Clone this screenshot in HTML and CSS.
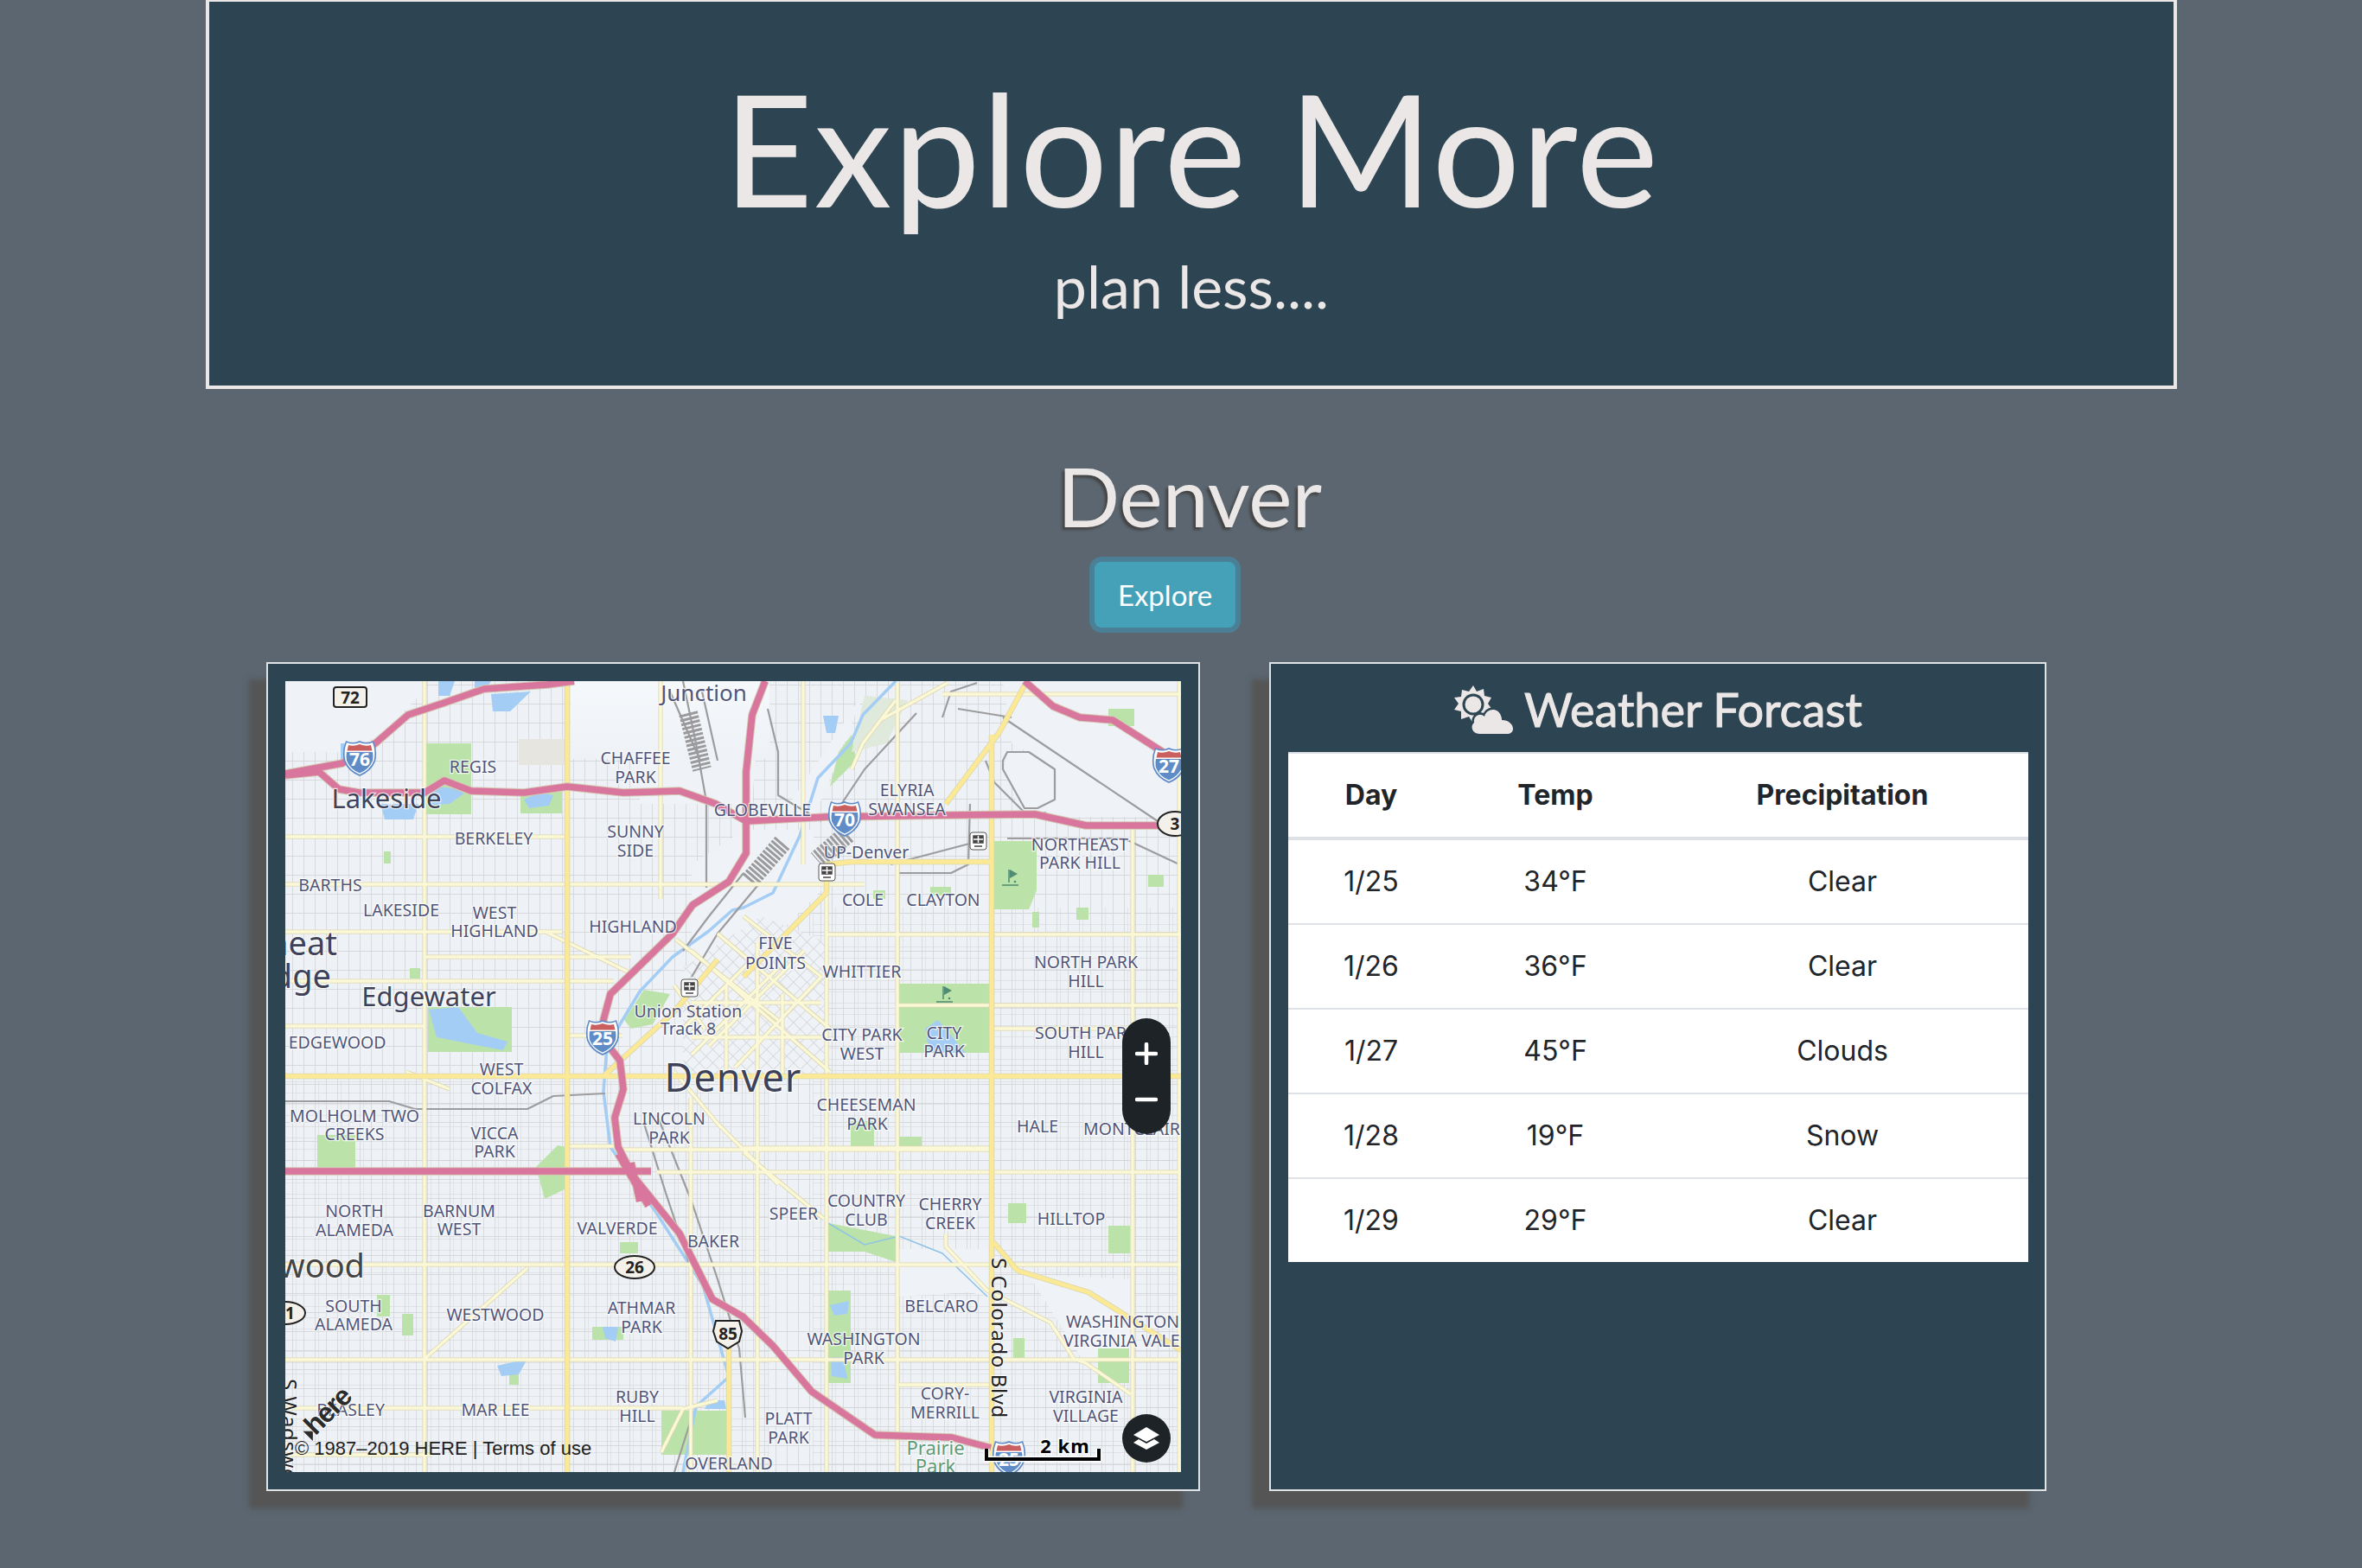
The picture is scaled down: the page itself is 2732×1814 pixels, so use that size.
FILE: index.html
```html
<!DOCTYPE html>
<html lang="en">
<head>
<meta charset="utf-8">
<title>Explore More</title>
<link rel="stylesheet" href="styles.css">
</head>
<body>
<header class="hero">
  <h1 class="hero-title">Explore More</h1>
  <p class="hero-sub">plan less....</p>
</header>
<section class="city">
  <h2 class="city-name">Denver</h2>
  <button class="explore-btn" type="button">Explore</button>
</section>
<main class="cards">
  <div class="card card-map">
    <div class="map">
      <svg class="map-svg" viewBox="330 788 1036 915" width="1036" height="915" xmlns="http://www.w3.org/2000/svg">
        <defs>
          <pattern id="streets" width="13" height="22" patternUnits="userSpaceOnUse">
            <path class="grid" d="M0 0V22M0 0H13"/>
          </pattern>
          <pattern id="streets-b" width="26" height="13" patternUnits="userSpaceOnUse" x="4" y="3">
            <path class="grid" d="M0 0V13M0 0H26"/>
          </pattern>
          <pattern id="downtown" width="11" height="11" patternUnits="userSpaceOnUse" patternTransform="rotate(45)">
            <path class="grid" d="M0 0V11M0 0H11"/>
          </pattern>
          <linearGradient id="north" x1="0" y1="0" x2="0" y2="1">
            <stop offset="0" stop-color="#f6f9fc"/>
            <stop offset="1" stop-color="#eef1f5"/>
          </linearGradient>
          <symbol id="shield" viewBox="0 0 40 44">
            <path class="sh-blue" d="M4 2Q12 6 20 2Q28 6 36 2Q41 14 38 26Q33 38 20 43Q7 38 2 26Q-1 14 4 2Z"/>
            <path class="sh-white" d="M5 4Q12 7 20 4Q28 7 35 4Q39 14 36.500 25Q32 36 20 41Q8 36 3.500 25Q1 14 5 4Z"/>
            <path class="sh-blue" d="M5 15H35Q36 20 35 25Q31 35 20 39.500Q9 35 5 25Q4 20 5 15Z"/>
            <path class="sh-red" d="M7 7Q13 9 20 6Q27 9 33 7L34.500 13.500H5.500Z"/>
          </symbol>
          <g id="arterials">
            <path d="M491 788V1703M764 788V1040M929 788V1000M1038 790V1703M1310 950V1703M1364 788V1703M799 1270V1703M876 1250V1703M956 1010V1703"/>
            <path d="M330 968H655M330 1023H1000M330 1078H650M491 1107H730M330 1135H710M330 1187H491M655 1198H720M330 1463H1366M330 1573H1366M330 1629H790M330 1683H500M860 1328H1146M760 1356H1366M956 1081H1366M1038 1163H1366M1147 1190H1310M1090 803H1366M720 1330H1146M1040 1602H1146M656 1326H715"/>
            <path d="M629 1077L732 1127M491 1572L610 1467M782 1087L900 1180M860 1333L953 1410M1094 1427V1442L1142 1493L1215 1530L1242 1572L1256 1577L1308 1613M1036 810L998 860L985 890M1020 832L1096 790M780 1240L830 1300L900 1370M815 1190L780 1140M520 1260L470 1240M765 1680L790 1630L830 1620"/>
            <path d="M800 1100L960 1240M830 1080L960 1190M860 1060L950 1130M900 1120L800 1220M930 1100L820 1210M950 1130L850 1235M870 1110L790 1190M840 1140V1250M876 1090V1250M905 1150V1250M800 1160H950M800 1200H950"/>
          </g>
          <g id="majors">
            <path d="M656 788V1703M1147 850V1703M330 1245H1366M985 997H1147M1094 930L1156 847L1185 793M956 1033L860 1130M956 1033V1000L985 997M1149 1437L1177 1470L1259 1495L1304 1523L1366 1562M700 1243L780 1170L830 1110M843 1545V1703"/>
          </g>
          <g id="highways">
            <path d="M330 895L396 883L434 860L472 827L514 813L560 797L633 792L664 788"/>
            <path d="M330 897L369 893L392 913L415 917L491 917L514 903L545 915L606 917L656 910L721 917L786 915L828 930L863 950L956 945L1101 943L1197 942L1256 955L1345 955"/>
            <path d="M885 788L870 827L863 893V987L843 1020L801 1047L778 1080L740 1117L706 1150L698 1180L700 1205L717 1227L721 1260L711 1293L715 1327L732 1360L786 1427L824 1503L859 1523L894 1557L939 1610L1012 1660L1101 1663L1146 1675"/>
            <path d="M1185 788L1218 817L1249 830L1287 833L1345 870"/>
            <path d="M330 1355H753M715 1335L750 1395M730 1345L740 1390"/>
          </g>
        </defs>

        <rect class="land" x="330" y="788" width="1036" height="915"/>
        <rect x="330" y="788" width="1036" height="915" fill="url(#streets)"/>
        <rect x="940" y="1050" width="426" height="653" fill="url(#streets-b)" class="soft"/>
        <rect x="330" y="1250" width="560" height="453" fill="url(#streets-b)" class="soft"/>

        <!-- open / industrial ground -->
        <path class="open" d="M665 788H880L870 930H740V800H665Z"/>
        <path class="open" d="M330 788H490V800L440 850L400 870H330Z"/>
        <rect class="north" x="660" y="788" width="230" height="90"/>
        <path class="open" d="M880 788H1160L1170 860L1340 950L1364 960V788ZM1000 800L900 950H940Z"/>
        <path class="open" d="M1160 870H1300L1340 945H1180Z"/>
        <path class="open" d="M800 1000L860 960L940 960L950 1030L860 1120H800Z"/>
        <path class="open" d="M1040 1445H1146V1500L1120 1495L1040 1500Z"/>
        <path class="open" d="M1190 1475L1310 1480V1570H1250Z"/>
        <polygon points="790,1120 880,1060 955,1090 955,1245 790,1245" class="open"/>
        <polygon points="790,1120 880,1060 955,1090 955,1245 790,1245" fill="url(#downtown)"/>
        <path class="khaki" d="M600 855H655V885H600Z"/>

        <!-- parks -->
        <g class="park">
          <rect x="493" y="860" width="52" height="82"/>
          <rect x="602" y="916" width="48" height="25"/>
          <rect x="495" y="1165" width="97" height="52"/>
          <rect x="367" y="1313" width="44" height="38"/>
          <rect x="1037" y="1138" width="107" height="25"/>
          <rect x="1037" y="1165" width="107" height="53"/>
          <path d="M1149 973H1199V1030L1190 1052H1149Z"/>
          <rect x="958" y="1493" width="26" height="107"/>
          <path d="M958 1415L1036 1430V1460L1000 1448H958Z"/>
          <rect x="765" y="1632" width="78" height="51"/>
          <path d="M620 1350L645 1325L655 1327V1375L630 1387Z"/>
          <rect x="717" y="1437" width="21" height="13"/>
          <rect x="685" y="1535" width="36" height="15"/>
          <rect x="984" y="1297" width="27" height="30"/>
          <rect x="1040" y="1315" width="26" height="12"/>
          <rect x="1166" y="1392" width="21" height="23"/>
          <rect x="1282" y="1418" width="25" height="32"/>
          <path d="M722 1180L745 1145L775 1150L755 1185L730 1190Z"/>
          <rect x="1282" y="820" width="30" height="20"/>
          <rect x="1270" y="1560" width="36" height="40"/>
          <rect x="1172" y="1548" width="13" height="24"/>
          <rect x="1245" y="1050" width="14" height="14"/>
          <rect x="1328" y="1012" width="18" height="14"/>
          <rect x="444" y="985" width="8" height="14"/>
          <rect x="474" y="1120" width="12" height="12"/>
          <rect x="436" y="1498" width="15" height="25"/>
          <rect x="465" y="1520" width="13" height="25"/>
          <rect x="589" y="1587" width="11" height="15"/>
          <path d="M970 870L985 850L990 880L960 910Z"/>
          <path d="M1000 805L1050 810L1025 860L985 870Z" class="park-pale"/>
          <rect x="1010" y="1030" width="14" height="10"/>
          <rect x="1076" y="1026" width="24" height="10"/>
          <rect x="1194" y="1055" width="8" height="18"/>
        </g>

        <!-- water -->
        <g class="water">
          <path d="M507 788H526L520 805H507ZM549 788H568L560 800H549ZM568 803L614 800L590 823L570 823Z"/>
          <path d="M495 915Q515 905 537 918L520 930L495 932Z"/>
          <path d="M440 930H484L478 948L445 948Z"/>
          <path d="M606 925Q625 915 640 920L635 932L612 935Z"/>
          <path d="M496 1168L530 1165L552 1195L587 1205L582 1215L545 1208L505 1200Z"/>
          <path d="M394 860H403V880H394Z"/>
          <path d="M952 828H970L966 848H956Z"/>
          <path d="M1070 1190L1085 1180L1117 1218H1075Z"/>
          <path d="M960 1510L982 1505L980 1520L965 1522Z"/>
          <path d="M961 1570L975 1570L980 1595L962 1592Z"/>
          <path d="M575 1580L610 1572L600 1590L580 1592Z"/>
          <path d="M697 1535H715L712 1552L700 1548Z"/>
          <path d="M820 1620L838 1620L840 1630H815Z"/>
        </g>
        <path class="river" d="M1036 788L998 827L984 860L946 900L925 967L894 1033L860 1050L847 1053L820 1077L778 1107L740 1147L702 1210L698 1263L706 1327L759 1403L813 1487L843 1593L805 1627L790 1703"/>
        <path class="creek" d="M958 1415L1000 1440L1040 1430L1090 1450L1142 1500"/>

        <!-- rail -->
        <g class="rail">
          <path d="M790 788L805 860L817 927V1027M812 800L830 880M775 800L810 880"/>
          <path d="M888 820L900 870V920L950 950M1090 830L1100 800L1130 790M1160 830L1339 950M1108 820L1170 830M1060 825L1000 890L960 950"/>
          <path d="M1160 880L1165 870H1190L1220 890V925L1200 935H1185L1160 890ZM1140 880L1150 905L1185 940H1210"/>
          <path d="M1030 1000L1125 975M1165 970H1300L1364 1000M1040 1010H1100L1120 1000L1122 930"/>
          <path d="M860 1010L820 1060L790 1100M880 1020L830 1080L800 1130"/>
          <path d="M330 1274H450L480 1283H610L640 1268L700 1265M760 1290L800 1390L830 1480L855 1560L862 1640M745 1300L770 1380L800 1470L800 1640L780 1703"/>
        </g>
        <path class="yard" d="M796 825L812 890"/>
        <path class="yard" d="M905 975L866 1020"/>
        <path class="yard" d="M980 965L945 995"/>

        <!-- roads -->
        <use href="#arterials" class="case thin"/>
        <use href="#arterials" class="road-art"/>
        <use href="#majors" class="case"/>
        <use href="#majors" class="road-major"/>
        <use href="#highways" class="case-hw"/>
        <use href="#highways" class="road-hw"/>

        <!-- labels -->
        <g class="lbl big">
          <text x="814" y="811" class="s26">Junction</text>
          <text x="447" y="935">Lakeside</text>
          <text x="496" y="1164">Edgewater</text>
          <text x="848" y="1263" class="s50">Denver</text>
          <text x="390" y="1105" class="end s38">Wheat</text>
          <text x="383" y="1143" class="end s38">Ridge</text>
          <text x="422" y="1478" class="end s38 grey">Lakewood</text>
        </g>
        <g class="lbl">
          <text x="547" y="894">REGIS</text>
          <text x="735" y="884">CHAFFEE</text><text x="735" y="906">PARK</text>
          <text x="882" y="944">GLOBEVILLE</text>
          <text x="1049" y="921">ELYRIA</text><text x="1049" y="943">SWANSEA</text>
          <text x="571" y="977">BERKELEY</text>
          <text x="735" y="969">SUNNY</text><text x="735" y="991">SIDE</text>
          <text x="1002" y="993">UP-Denver</text>
          <text x="1249" y="984">NORTHEAST</text><text x="1249" y="1005">PARK HILL</text>
          <text x="382" y="1031">BARTHS</text>
          <text x="464" y="1060">LAKESIDE</text>
          <text x="572" y="1063">WEST</text><text x="572" y="1084">HIGHLAND</text>
          <text x="732" y="1079">HIGHLAND</text>
          <text x="998" y="1048">COLE</text>
          <text x="1091" y="1048">CLAYTON</text>
          <text x="897" y="1098">FIVE</text><text x="897" y="1121">POINTS</text>
          <text x="997" y="1131">WHITTIER</text>
          <text x="1256" y="1120">NORTH PARK</text><text x="1256" y="1142">HILL</text>
          <text x="796" y="1177">Union Station</text><text x="796" y="1197">Track 8</text>
          <text x="997" y="1204">CITY PARK</text><text x="997" y="1226">WEST</text>
          <text x="1092" y="1202">CITY</text><text x="1092" y="1223">PARK</text>
          <text x="1256" y="1202">SOUTH PARK</text><text x="1256" y="1224">HILL</text>
          <text x="390" y="1213">EDGEWOOD</text>
          <text x="580" y="1244">WEST</text><text x="580" y="1266">COLFAX</text>
          <text x="1002" y="1285">CHEESEMAN</text><text x="1003" y="1307">PARK</text>
          <text x="774" y="1301">LINCOLN</text><text x="774" y="1323">PARK</text>
          <text x="410" y="1298">MOLHOLM TWO</text><text x="410" y="1319">CREEKS</text>
          <text x="572" y="1318">VICCA</text><text x="572" y="1339">PARK</text>
          <text x="1200" y="1310">HALE</text>
          <text x="1253" y="1313" class="start">MONTCLAIR</text>
          <text x="410" y="1408">NORTH</text><text x="410" y="1430">ALAMEDA</text>
          <text x="531" y="1408">BARNUM</text><text x="531" y="1429">WEST</text>
          <text x="714" y="1428">VALVERDE</text>
          <text x="825" y="1443">BAKER</text>
          <text x="918" y="1411">SPEER</text>
          <text x="1002" y="1396">COUNTRY</text><text x="1002" y="1418">CLUB</text>
          <text x="1099" y="1400">CHERRY</text><text x="1099" y="1422">CREEK</text>
          <text x="1239" y="1417">HILLTOP</text>
          <text x="409" y="1518">SOUTH</text><text x="409" y="1539">ALAMEDA</text>
          <text x="573" y="1528">WESTWOOD</text>
          <text x="742" y="1520">ATHMAR</text><text x="742" y="1542">PARK</text>
          <text x="1089" y="1518">BELCARO</text>
          <text x="999" y="1556">WASHINGTON</text><text x="999" y="1578">PARK</text>
          <text x="1233" y="1536" class="start">WASHINGTON</text>
          <text x="1230" y="1558" class="start">VIRGINIA VALE</text>
          <text x="737" y="1623">RUBY</text><text x="737" y="1645">HILL</text>
          <text x="573" y="1638">MAR LEE</text>
          <text x="445" y="1638" class="end">BEASLEY</text>
          <text x="1093" y="1619">CORY-</text><text x="1093" y="1641">MERRILL</text>
          <text x="1256" y="1623">VIRGINIA</text><text x="1256" y="1645">VILLAGE</text>
          <text x="912" y="1648">PLATT</text><text x="912" y="1670">PARK</text>
          <text x="1082" y="1683" class="green">Prairie</text><text x="1082" y="1704" class="green">Park</text>
          <text x="843" y="1700">OVERLAND</text>
        </g>
        <text class="street" transform="translate(1147 1455) rotate(90)">S Colorado Blvd</text>
        <text class="street" transform="translate(326 1595) rotate(90)">S Wadsworth Blvd</text>

        <!-- interstate shields -->
        <use href="#shield" x="396" y="855" width="40" height="44"/>
        <use href="#shield" x="677" y="1178" width="40" height="44"/>
        <use href="#shield" x="957" y="925" width="40" height="44"/>
        <use href="#shield" x="1332" y="863" width="40" height="44"/>
        <use href="#shield" x="1147" y="1665" width="40" height="44"/>
        <g class="shield-num">
          <text x="416" y="886">76</text>
          <text x="697" y="1209">25</text>
          <text x="977" y="956">70</text>
          <text x="1352" y="894">27</text>
          <text x="1167" y="1696">25</text>
        </g>

        <!-- route signs -->
        <rect class="sign" x="386" y="795" width="38" height="23" rx="3"/>
        <text class="sign-num" x="405" y="814">72</text>
        <ellipse class="sign" cx="734" cy="1466" rx="23" ry="13"/>
        <text class="sign-num" x="734" y="1473">26</text>
        <ellipse class="sign" cx="330" cy="1519" rx="23" ry="13"/>
        <text class="sign-num" x="330" y="1526">21</text>
        <ellipse class="sign" cx="1359" cy="953" rx="20" ry="14"/>
        <text class="sign-num" x="1359" y="960">3</text>
        <path class="sign" d="M828 1528H855L858 1540L855 1552L842 1560L829 1552L825 1540Z"/>
        <text class="sign-num" x="842" y="1550">85</text>

        <!-- transit markers -->
        <g class="transit" transform="translate(788 1133)">
          <rect width="19" height="20" rx="3"/><path d="M4 4H15V12H4ZM5 16H14"/><path class="t-gap" d="M9.500 4V12M4 8H15"/>
        </g>
        <g class="transit" transform="translate(1122 963)">
          <rect width="19" height="20" rx="3"/><path d="M4 4H15V12H4ZM5 16H14"/><path class="t-gap" d="M9.500 4V12M4 8H15"/>
        </g>
        <g class="transit" transform="translate(947 999)">
          <rect width="19" height="20" rx="3"/><path d="M4 4H15V12H4ZM5 16H14"/><path class="t-gap" d="M9.500 4V12M4 8H15"/>
        </g>

        <!-- golf flags -->
        <g class="flag" transform="translate(1165 1006)">
          <path class="flag-pole" d="M2 0V15M-6 18H13"/><path d="M3 0L12 5L3 10Z"/><circle cx="9" cy="14" r="1.300"/>
        </g>
        <g class="flag" transform="translate(1089 1141)">
          <path class="flag-pole" d="M2 0V15M-6 18H13"/><path d="M3 0L12 5L3 10Z"/><circle cx="9" cy="14" r="1.300"/>
        </g>

        <!-- attribution -->
        <g transform="rotate(-45 376 1636)">
          <path class="here-dot" d="M344 1632L352 1640L344 1648Z"/>
          <text class="here" x="350" y="1646">here</text>
        </g>
        <text class="copy" x="341" y="1683">© 1987–2019 HERE | Terms of use</text>

        <!-- scale -->
        <path class="scale-halo" d="M1141 1676V1688H1271V1676"/>
        <path class="scale" d="M1141 1676V1688H1271V1676"/>
        <text class="scale-text" x="1232" y="1681">2 km</text>
      </svg>
      <div class="zoom-ctrl">
        <button class="map-btn" type="button" aria-label="Zoom in">
          <svg width="26" height="26" viewBox="0 0 26 26"><path d="M13 2V24M2 13H24"/></svg>
        </button>
        <button class="map-btn" type="button" aria-label="Zoom out">
          <svg width="26" height="26" viewBox="0 0 26 26"><path d="M2 13H24"/></svg>
        </button>
      </div>
      <button class="layers-btn" type="button" aria-label="Layers">
        <svg width="32" height="28" viewBox="0 0 32 28">
          <path class="lay-top" d="M16 1L31 10L16 18L1 10Z"/>
          <path class="lay-bot" d="M7 15L1 19L16 27L31 19L25 15L16 20Z"/>
        </svg>
      </button>
    </div>
  </div>

  <div class="card card-weather">
    <div class="weather-head">
      <svg class="weather-icon" width="69" height="56" viewBox="0 0 69 56" aria-hidden="true">
        <path class="sun" d="M23 0L27 7L35 4L36 12L44 14L40 21L45 28L37 30L36 38L28 36L23 44L18 36L9 39L9 30L1 28L6 21L1 14L9 13L10 5L18 7Z"/>
        <circle class="sun-gap" cx="23" cy="22" r="12.500"/>
        <circle class="sun" cx="23" cy="22" r="9.500"/>
        <path class="cloud-edge" d="M30 56C22 56 19 47 24 43C23 35 31 31 36 36C38 26 52 25 55 35C56 37 56 39 56 40C64 40 69 45 69 50C69 54 66 56 62 56Z"/>
        <path class="sun" d="M30 56C22 56 19 47 24 43C23 35 31 31 36 36C38 26 52 25 55 35C56 37 56 39 56 40C64 40 69 45 69 50C69 54 66 56 62 56Z"/>
      </svg>
      <h3 class="weather-title">Weather Forcast</h3>
    </div>
    <table class="forecast">
      <colgroup><col class="col-day"><col class="col-temp"><col class="col-prec"></colgroup>
      <thead>
        <tr><th>Day</th><th>Temp</th><th>Precipitation</th></tr>
      </thead>
      <tbody>
        <tr><td>1/25</td><td>34°F</td><td>Clear</td></tr>
        <tr><td>1/26</td><td>36°F</td><td>Clear</td></tr>
        <tr><td>1/27</td><td>45°F</td><td>Clouds</td></tr>
        <tr><td>1/28</td><td>19°F</td><td>Snow</td></tr>
        <tr><td>1/29</td><td>29°F</td><td>Clear</td></tr>
      </tbody>
    </table>
  </div>
</main>
</body>
</html>
```
FILE: styles.css
```css
* { box-sizing: border-box; }
html, body { margin: 0; padding: 0; }
body {
  background: #5b6670;
  color: #ebe7e6;
  font-family: Lato, "Noto Sans", sans-serif;
  height: 1814px;
  overflow: hidden;
}
.hero {
  margin: -2px 0 0 238px;
  width: 2280px;
  height: 452px;
  background: #2d4452;
  border: 4px solid #ebe7e6;
  text-align: center;
  padding-top: 58px;
}
.hero-title {
  margin: 0;
  font-weight: 400;
  font-size: 180px;
  line-height: 220px;
  letter-spacing: 1.500px;
}
.hero-sub {
  margin: 11px 0 0;
  font-size: 68px;
  line-height: 80px;
  font-weight: 400;
}
.city {
  margin-left: 238px;
  width: 2280px;
  text-align: center;
  padding-top: 63px;
  height: 316px;
}
.city-name {
  margin: 0 4px 0 0;
  font-size: 95px;
  line-height: 120px;
  font-weight: 400;
  text-shadow: -3px 3px 3px #444;
}
.explore-btn {
  display: inline-block;
  margin: 17px 61px 0 0;
  width: 163px;
  height: 76px;
  background: #45a1b8;
  border: 0;
  border-radius: 8px;
  box-shadow: 0 0 0 6px #4a7f95;
  color: #fff;
  font-family: Lato, "Noto Sans", sans-serif;
  font-size: 33px;
  padding: 0;
}
.cards {
  display: flex;
  gap: 80px;
  margin-left: 308px;
}
.card {
  height: 959px;
  background: #2d4452;
  border: 2px solid #dfe3e5;
  box-shadow: -20px 20px 6px #555;
  padding: 20px;
}
.card-map { width: 1080px; }
.card-weather { width: 899px; }
.map {
  position: relative;
  width: 1036px;
  height: 915px;
  overflow: hidden;
}
.map-svg { display: block; }
.zoom-ctrl {
  position: absolute;
  left: 968px;
  top: 390px;
  width: 56px;
  height: 134px;
  padding: 14px 0;
  border-radius: 28px;
  background: #1d2327;
  display: flex;
  flex-direction: column;
}
.map-btn {
  flex: 1;
  background: none;
  border: 0;
  padding: 0;
  display: flex;
  align-items: center;
  justify-content: center;
}
.map-btn path {
  stroke: #fff;
  stroke-width: 4.500;
  stroke-linecap: round;
  fill: none;
}
.layers-btn {
  position: absolute;
  left: 968px;
  top: 848px;
  width: 56px;
  height: 56px;
  border-radius: 50%;
  border: 0;
  padding: 0;
  background: #1d2327;
  display: flex;
  align-items: center;
  justify-content: center;
}
.lay-top { fill: #fff; }
.lay-bot { fill: #fff; }

/* map painting */
.land { fill: #eef1f5; }
.grid { stroke: #cfd1d5; stroke-width: 1.400; fill: none; }
.soft { opacity: .6; }
.open { fill: #eff2f6; }
.north { fill: url(#north); }
.khaki { fill: #e6e5df; }
.park { fill: #bbe3a9; }
.park-pale { fill: #dfe9dc; }
.water { fill: #a3cdf5; }
.river { fill: none; stroke: #a3cdf5; stroke-width: 3.500; stroke-linejoin: round; }
.creek { fill: none; stroke: #8fc3e6; stroke-width: 1.500; }
.rail { fill: none; stroke: #9d9d9f; stroke-width: 2.200; stroke-linejoin: round; }
.yard { fill: none; stroke: #9a9a9c; stroke-width: 22; stroke-dasharray: 3 2; }
.case { fill: none; stroke: #dcd7ae; stroke-width: 6.500; stroke-linejoin: round; }
.case.thin { stroke-width: 5; }
.road-art { fill: none; stroke: #fbf8d8; stroke-width: 3.400; stroke-linejoin: round; }
.road-major { fill: none; stroke: #fbe995; stroke-width: 4.800; stroke-linejoin: round; }
.case-hw { fill: none; stroke: #d5c6b2; stroke-width: 9.500; stroke-linejoin: round; }
.road-hw { fill: none; stroke: #d8769d; stroke-width: 7.500; stroke-linejoin: round; }
.lbl text {
  font-family: "Noto Sans", "Open Sans", sans-serif;
  font-size: 19.500px;
  fill: #50557a;
  stroke: rgba(255,255,255,.75);
  stroke-width: 2.500px;
  paint-order: stroke;
  text-anchor: middle;
}
.lbl .start { text-anchor: start; }
.lbl .end { text-anchor: end; }
.lbl .green { fill: #5d9a76; font-size: 22px; }
.lbl.big text { font-size: 31px; fill: #3e4259; }
.lbl.big .s26 { font-size: 26px; fill: #50557a; }
.lbl.big .s38 { font-size: 38px; }
.lbl.big .s50 { font-size: 45px; letter-spacing: 1px; }
.lbl.big .grey { fill: #444; }
.street {
  font-family: "Noto Sans", sans-serif;
  font-size: 24px;
  fill: #222;
  stroke: rgba(255,255,255,.7);
  stroke-width: 2px;
  paint-order: stroke;
  letter-spacing: .6px;
}
.sh-blue { fill: #5f8cc7; }
.sh-white { fill: #fff; }
.sh-red { fill: #c9605f; }
.shield-num text {
  font-family: "Noto Sans", sans-serif;
  font-weight: 700;
  font-size: 21px;
  fill: #fff;
  text-anchor: middle;
}
.sign { fill: #f3f1ea; stroke: #222; stroke-width: 2; }
.sign-num {
  font-family: "Noto Sans", sans-serif;
  font-weight: 700;
  font-size: 19px;
  fill: #222;
  text-anchor: middle;
}
.transit rect { fill: #fff; stroke: #555; stroke-width: 1; }
.transit path { fill: #444; stroke: #444; stroke-width: 1.500; }
.transit .t-gap { stroke: #fff; stroke-width: 1.500; fill: none; }
.flag path { fill: #4f8c71; }
.flag circle { fill: #4f8c71; }
.flag .flag-pole { fill: none; stroke: #4f8c71; stroke-width: 1.500; }
.here {
  font-family: "Liberation Sans", sans-serif;
  font-weight: 700;
  font-size: 32px;
  letter-spacing: -1.500px;
  fill: #2b2b2b;
  stroke: rgba(255,255,255,.7);
  stroke-width: 2px;
  paint-order: stroke;
}
.here-dot { fill: #2b2b2b; }
.copy {
  font-family: "Liberation Sans", sans-serif;
  font-size: 22px;
  fill: #1e1e1e;
}
.scale { fill: none; stroke: #000; stroke-width: 4; }
.scale-halo { fill: none; stroke: #fff; stroke-width: 7; }
.scale-text {
  font-family: "Noto Sans", sans-serif;
  font-weight: 700;
  font-size: 22px;
  fill: #000;
  stroke: #fff;
  stroke-width: 3px;
  paint-order: stroke;
  text-anchor: middle;
  letter-spacing: 1px;
}

/* weather */
.weather-head {
  display: flex;
  align-items: center;
  justify-content: center;
  gap: 13px;
  height: 82px;
  padding-bottom: 16px;
}
.sun { fill: #ebe7e6; }
.sun-gap { fill: #2d4452; }
.cloud-edge { fill: #ebe7e6; stroke: #2d4452; stroke-width: 5; }
.weather-title {
  margin: 0;
  font-size: 54px;
  font-weight: 400;
  line-height: 70px;
  color: #ebe7e6;
  -webkit-text-stroke: 1px #ebe7e6;
}
.forecast {
  width: 856px;
  table-layout: fixed;
  border-collapse: collapse;
  background: #fff;
  color: #212529;
  font-family: Inter, "Liberation Sans", sans-serif;
  font-size: 32px;
  line-height: 48px;
  text-align: center;
}
.col-day { width: 192px; }
.col-temp { width: 234px; }
.forecast th, .forecast td {
  padding: 24px;
  border-top: 2px solid #dee2e6;
  font-weight: 400;
}
.forecast th { font-weight: 700; border-bottom: 4px solid #dee2e6; }
```
